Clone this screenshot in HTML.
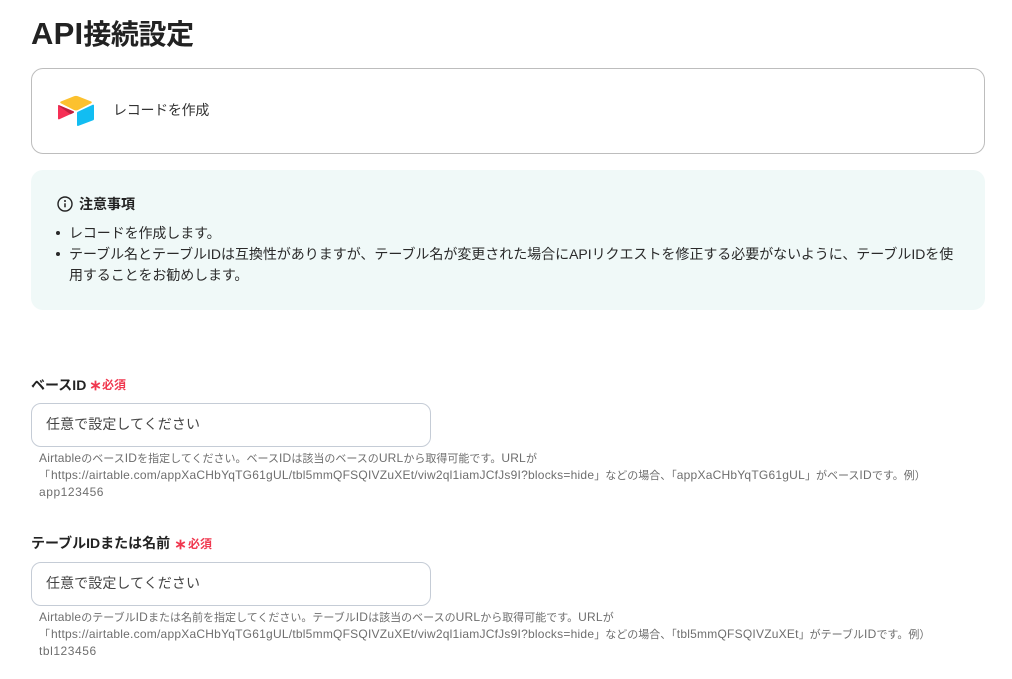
<!DOCTYPE html>
<html lang="ja">
<head>
<meta charset="utf-8">
<style>
html,body{margin:0;padding:0;background:#fff}
body{width:1012px;height:679px;overflow:hidden;position:relative;font-family:"Liberation Sans","Noto Sans CJK JP",sans-serif;color:#2a2a2a}
.a{position:absolute;white-space:nowrap}
.box{position:absolute;box-sizing:border-box}
.note{font-size:11px;color:#6e6e6e;line-height:18px;left:39px}
.note b{font-weight:400;font-size:12px;letter-spacing:.2px}
.note b.u{letter-spacing:.23px}
.note b.s{margin-left:1px}
.inp{left:31px;width:400px;height:44px;border:1px solid #c5ccd6;border-radius:10px;background:#fff}
.ph{left:46px;font-size:14px;line-height:20px;color:#444;letter-spacing:.08px}
.lab{font-size:14px;font-weight:700;line-height:20px;left:31px;color:#222}
.req{font-size:12px;font-weight:700;color:#f0384f;line-height:16px}
.li{font-size:14px;line-height:22px;color:#2a2a2a;left:69px}
.dot{position:absolute;width:4px;height:4px;border-radius:50%;background:#2a2a2a;left:56px}
</style>
</head>
<body>
<div class="a" style="left:31px;top:14px;font-size:28px;font-weight:700;line-height:40px;color:#222;letter-spacing:-.4px"><span style="font-size:31px;letter-spacing:.2px">API</span>接続設定</div>

<div class="box" style="left:31px;top:68px;width:954px;height:86px;border:1px solid #bdbdbd;border-radius:12px"></div>
<svg class="a" style="left:57px;top:95px" width="38" height="32" viewBox="0 0 38 32">
<path d="M17 1.300 3.800 6.500C3 6.900 3 7.900 3.800 8.300L17 15C18.300 15.600 19.700 15.600 21 15L34.200 8.300C35 7.900 35 6.900 34.200 6.500L21 1.300C19.700.8 18.300.8 17 1.300Z" fill="#fcc12e"/>
<path d="M20 18V30C20 30.800 20.600 31.200 21.300 30.900L36.200 25.200C36.700 25 37 24.600 37 24V10.500C37 9.800 36.400 9.400 35.700 9.700L20.800 16.800C20.300 17 20 17.500 20 18Z" fill="#12bdf2"/>
<path d="M1 11C1 10.300 1.600 10 2.200 10.200L16.400 16.200C17.200 16.500 17.200 17.500 16.400 17.900L2.300 24.300C1.600 24.600 1 24.200 1 23.500Z" fill="#f62f55"/>
<path d="M2.200 10.200 16.400 16.200C17.200 16.500 17.200 17.500 16.400 17.900L13.500 19.200 1.200 10.500C1.400 10.200 1.800 10.100 2.200 10.200Z" fill="#c0213f"/>
</svg>
<div class="a" style="left:113px;top:100px;font-size:14px;line-height:20px;color:#333;letter-spacing:-.28px">レコードを作成</div>

<div class="box" style="left:31px;top:170px;width:954px;height:140px;background:#f0f9f8;border-radius:12px"></div>
<svg class="a" style="left:57px;top:196px" width="16" height="16" viewBox="0 0 16 16" fill="none">
<circle cx="8" cy="8" r="7" stroke="#222" stroke-width="1.400"/>
<circle cx="8" cy="5" r="1" fill="#222"/>
<path d="M8 7.300v4" stroke="#222" stroke-width="1.500"/>
</svg>
<div class="a" style="left:79px;top:194px;font-size:14px;font-weight:700;line-height:20px;color:#222">注意事項</div>
<div class="dot" style="top:231px"></div>
<div class="a li" style="top:222px;letter-spacing:-.1px">レコードを作成します。</div>
<div class="dot" style="top:252px"></div>
<div class="a li" style="top:243px;letter-spacing:-.03px">テーブル名とテーブルIDは互換性がありますが、テーブル名が変更された場合にAPIリクエストを修正する必要がないように、テーブルIDを使</div>
<div class="a li" style="top:264px;letter-spacing:-.1px">用することをお勧めします。</div>

<div class="a lab" style="top:375px">ベースID</div>
<svg class="a" style="left:90px;top:380px" width="11" height="11" viewBox="0 0 11 11"><path d="M5.500 .6v9.800M1.200 3 9.800 8M9.800 3 1.200 8" stroke="#f0384f" stroke-width="1.800"/></svg>
<div class="a req" style="left:102px;top:377px">必須</div>
<div class="box inp" style="top:403px"></div>
<div class="a ph" style="top:414px">任意で設定してください</div>
<div class="a note" style="top:449px"><b>Airtable</b>のベース<b>ID</b>を指定してください。ベース<b>ID</b>は該当のベースの<b>URL</b>から取得可能です。<b>URL</b>が</div>
<div class="a note" style="top:466px">「<b class="u s">https://airtable.com/appXaCHbYqTG61gUL/tbl5mmQFSQIVZuXEt/viw2ql1iamJCfJs9I?blocks=hide</b>」などの場合、「<b class="u">appXaCHbYqTG61gUL</b>」がベース<b>ID</b>です。例）</div>
<div class="a note" style="top:483px"><b style="letter-spacing:.55px">app123456</b></div>

<div class="a lab" style="top:533px">テーブルIDまたは名前</div>
<svg class="a" style="left:175px;top:539px" width="11" height="11" viewBox="0 0 11 11"><path d="M5.500 .6v9.800M1.200 3 9.800 8M9.800 3 1.200 8" stroke="#f0384f" stroke-width="1.800"/></svg>
<div class="a req" style="left:188px;top:536px">必須</div>
<div class="box inp" style="top:562px"></div>
<div class="a ph" style="top:573px">任意で設定してください</div>
<div class="a note" style="top:608px"><b>Airtable</b>のテーブル<b>ID</b>または名前を指定してください。テーブル<b>ID</b>は該当のベースの<b>URL</b>から取得可能です。<b>URL</b>が</div>
<div class="a note" style="top:625px">「<b class="u s">https://airtable.com/appXaCHbYqTG61gUL/tbl5mmQFSQIVZuXEt/viw2ql1iamJCfJs9I?blocks=hide</b>」などの場合、「<b class="u">tbl5mmQFSQIVZuXEt</b>」がテーブル<b>ID</b>です。例）</div>
<div class="a note" style="top:642px"><b style="letter-spacing:.55px">tbl123456</b></div>
</body>
</html>
